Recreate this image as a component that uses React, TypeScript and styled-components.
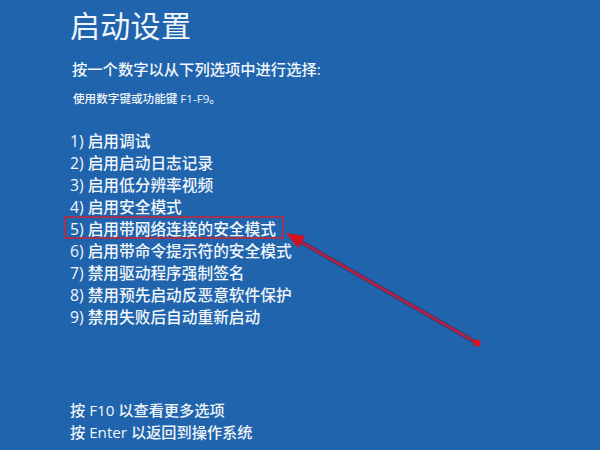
import React from "react";
import styled, { createGlobalStyle } from "styled-components";

const Global = createGlobalStyle`
  html, body { margin: 0; padding: 0; background: #1f64ad; }
  #root { width: 600px; height: 450px; }
`;

const Screen = styled.div`
  position: relative;
  width: 600px;
  height: 450px;
  box-sizing: border-box;
  background: #1f64ad;
  color: #f2f6fb;
  font-family: "Open Sans", "Noto Sans CJK SC", sans-serif;
  padding: 11px 0 7px 70px;
  display: flex;
  flex-direction: column;
  overflow: hidden;
`;

const Title = styled.h1`
  margin: 0;
  font-size: 30px;
  line-height: 30px;
  font-weight: 400;
  letter-spacing: 0.3px;
`;

const Prompt = styled.p`
  margin: 18px 0 0 2px;
  font-size: 15.3px;
  line-height: 20px;
  font-weight: 500;
`;

const Hint = styled.p`
  margin: 13px 0 0 3px;
  font-size: 11.6px;
  line-height: 14px;
  font-weight: 500;
`;

const OptionList = styled.ol`
  list-style: none;
  margin: 24px 0 0 0;
  padding: 0;
  display: flex;
  flex-direction: column;
`;

const Option = styled.li<{ $highlighted?: boolean }>`
  position: relative;
  font-size: 15.7px;
  line-height: 22px;
  font-weight: 500;
  white-space: nowrap;
  &::after {
    content: "";
    display: ${(p) => (p.$highlighted ? "block" : "none")};
    position: absolute;
    left: -6px;
    top: -2px;
    width: 220px;
    height: 23px;
    border: 2px solid #a03252;
    box-sizing: border-box;
    border-radius: 1px;
  }
`;

const Footer = styled.div`
  margin-top: auto;
  display: flex;
  flex-direction: column;
`;

const FooterLine = styled.div`
  font-size: 15.2px;
  line-height: 22px;
  font-weight: 500;
`;

const Overlay = styled.svg`
  position: absolute;
  left: 0;
  top: 0;
  width: 600px;
  height: 450px;
  pointer-events: none;
`;

const options = [
  "1) 启用调试",
  "2) 启用启动日志记录",
  "3) 启用低分辨率视频",
  "4) 启用安全模式",
  "5) 启用带网络连接的安全模式",
  "6) 启用带命令提示符的安全模式",
  "7) 禁用驱动程序强制签名",
  "8) 禁用预先启动反恶意软件保护",
  "9) 禁用失败后自动重新启动",
];

export default function App() {
  return (
    <>
      <Global />
      <Screen>
        <Title>启动设置</Title>
        <Prompt>按一个数字以从下列选项中进行选择:</Prompt>
        <Hint>使用数字键或功能键 F1-F9。</Hint>
        <OptionList>
          {options.map((o, i) => (
            <Option key={o} $highlighted={i === 4}>
              {o}
            </Option>
          ))}
        </OptionList>
        <Footer>
          <FooterLine>按 F10 以查看更多选项</FooterLine>
          <FooterLine>按 Enter 以返回到操作系统</FooterLine>
        </Footer>
        <Overlay viewBox="0 0 600 450">
          <line x1="477" y1="343" x2="296" y2="239" stroke="#5a1a44" strokeWidth="4.5" strokeLinecap="round" opacity="0.5" />
          <line x1="477" y1="343" x2="296" y2="239" stroke="#b81f3c" strokeWidth="2.5" strokeLinecap="round" />
          <polygon points="286,233 305,236 298,248" fill="#d4121f" />
          <circle cx="477" cy="343" r="3.5" fill="#e0101c" />
        </Overlay>
      </Screen>
    </>
  );
}
